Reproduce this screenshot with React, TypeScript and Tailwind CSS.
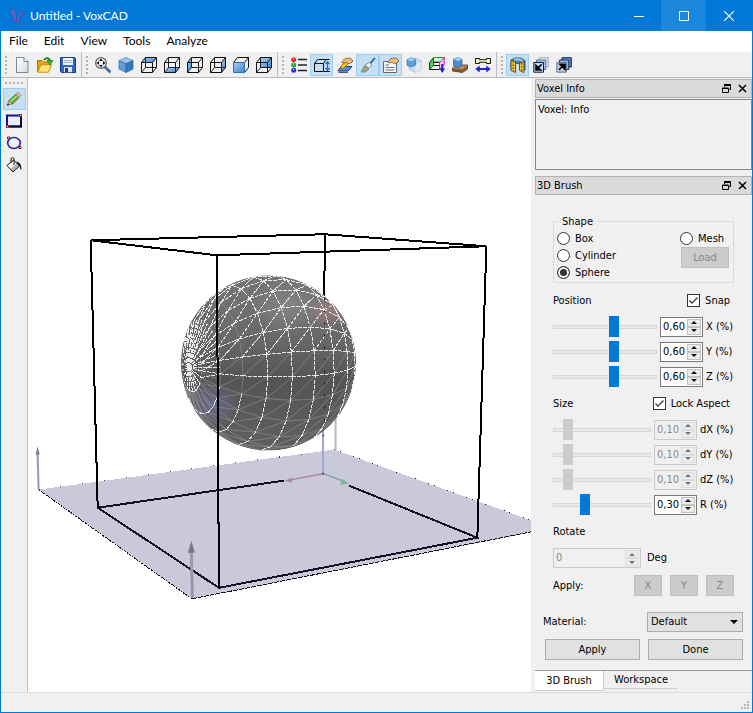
import { useState } from "react";
import type { ReactNode } from "react";
import clsx from "clsx";

type Face = "top" | "bottom" | "left" | "right" | "front" | "back";

const FACES: Record<Face, string> = {
  top: "0.5,5.5 4.5,0.5 15.5,0.5 11.5,5.5",
  bottom: "0.5,15.5 4.5,10.5 15.5,10.5 11.5,15.5",
  left: "0.5,5.5 4.5,0.5 4.5,10.5 0.5,15.5",
  right: "11.5,5.5 15.5,0.5 15.5,10.5 11.5,15.5",
  front: "0.5,5.5 11.5,5.5 11.5,15.5 0.5,15.5",
  back: "4.5,0.5 15.5,0.5 15.5,10.5 4.5,10.5",
};

function Icon({ children }: { children: ReactNode }) {
  return (
    <svg width="16" height="16" viewBox="0 0 16 16" fill="none" aria-hidden="true">
      {children}
    </svg>
  );
}

function CubeIcon({ face }: { face: Face }) {
  return (
    <Icon>
      <polygon points={FACES[face]} fill="url(#faceBlue)" />
      {face !== "front" && (
        <path d="M4.5 .5V10.5M4.5 10.5H15.5M4.5 10.5L.5 15.5" stroke="#222" />
      )}
      <path
        d="M4.5 .5H15.5V10.5M.5 5.5L4.5 .5M11.5 5.5L15.5 .5M11.5 15.5L15.5 10.5"
        stroke="#111"
      />
      <path
        d="M.5 5.5H11.5V15.5H.5Z"
        stroke={face === "front" ? "#2f6fb5" : "#111"}
      />
    </Icon>
  );
}

function SolidCube() {
  return (
    <Icon>
      <path d="M8 .5L15 3.5L8 6.8L1 3.5Z" fill="#9cc8ee" stroke="#3f7fbd" strokeWidth=".7" />
      <path d="M1 3.5L8 6.8V15.5L1 12Z" fill="#5c9dda" stroke="#2f6dab" strokeWidth=".7" />
      <path d="M15 3.5L8 6.8V15.5L15 12Z" fill="#3577bd" stroke="#255f9c" strokeWidth=".7" />
    </Icon>
  );
}

function LayerStack({ up }: { up?: boolean }) {
  return (
    <Icon>
      <path d="M6 .7H15.3V10H6Z" fill={up ? "#5b93cf" : "#dde3ee"} stroke={up ? "#10233f" : "#a3abc0"} />
      <path d="M3.5 3H12.8V12.5H3.5Z" fill={up ? "#8fb5e0" : "#a9bfe0"} stroke={up ? "#1b2f4f" : "#5d7196"} />
      <path d="M.8 5.5H10.5V15.2H.8Z" fill={up ? "#b8c7df" : "#bcdcff"} stroke={up ? "#6c7b94" : "#0c1c38"} />
      {up ? (
        <path d="M3 12.8L8 7.8M4 7.2H9V12.2Z" stroke="#000" strokeWidth="1.6" fill="#000" />
      ) : (
        <path d="M8.6 7.4L4 12M3 8.5V13H7.6Z" stroke="#000" strokeWidth="1.6" fill="#000" />
      )}
    </Icon>
  );
}

function Hand() {
  return (
    <path
      d="M5 4.5L8 1.5L13 1L15.5 3V5L12 7L9 5.5L5 6Z"
      fill="#edb878"
      stroke="#6b421b"
      strokeWidth=".9"
      strokeDasharray="1.5 .6"
    />
  );
}

const fileTools = [
  {
    name: "New",
    icon: (
      <Icon>
        <path d="M2.5 .5H10L14 4.5V15.5H2.5Z" fill="url(#paper)" stroke="#7f8790" />
        <path d="M10 .5V4.5H14" fill="#fff" stroke="#7f8790" />
      </Icon>
    ),
  },
  {
    name: "Open",
    icon: (
      <Icon>
        <path d="M.5 14.5V3.5H5L6.5 5H12.5V8" fill="#e8a317" stroke="#b87800" />
        <path d="M.7 15.2L4 7.7H14.5L11.5 15.2Z" fill="#ffe47a" stroke="#c98d08" />
        <path d="M7 3C9 .2 12.3.6 13 4" stroke="#1c8a1c" strokeWidth="2" />
        <path d="M10 3.6H16L13 8Z" fill="#3bc43b" stroke="#146e14" strokeWidth=".7" />
      </Icon>
    ),
  },
  {
    name: "Save",
    icon: (
      <Icon>
        <path d="M.5 .5H14.5L15.5 1.5V15.5H1.5L.5 14.5Z" fill="#3266bd" stroke="#163a86" />
        <path d="M3 1H13V8H3Z" fill="#f3f7fc" />
        <path d="M4 3.5H12M4 5.5H12" stroke="#9cacc4" />
        <path d="M4 10H12V15.2H4Z" fill="#dfe5ee" />
        <path d="M5 11H8V15H5Z" fill="#1e3d7d" />
      </Icon>
    ),
  },
];

const viewTools = [
  {
    name: "Zoom all",
    icon: (
      <Icon>
        <path d="M10 10L14.6 14.6" stroke="#3571b5" strokeWidth="2.8" strokeLinecap="round" />
        <circle cx="6" cy="6" r="5.3" fill="#f4f6f8" stroke="#5d646b" strokeWidth="1.3" />
        <path
          d="M6 1.6L8 4H4ZM6 10.4L8 8H4ZM1.6 6L4 4V8ZM10.4 6L8 4V8Z"
          fill="#111"
        />
      </Icon>
    ),
  },
  { name: "Isometric", icon: <SolidCube /> },
  { name: "Top", icon: <CubeIcon face="top" /> },
  { name: "Bottom", icon: <CubeIcon face="bottom" /> },
  { name: "Left", icon: <CubeIcon face="left" /> },
  { name: "Right", icon: <CubeIcon face="right" /> },
  { name: "Front", icon: <CubeIcon face="front" /> },
  { name: "Back", icon: <CubeIcon face="back" /> },
];

const panelTools = [
  {
    name: "Palette",
    icon: (
      <Icon>
        <path d="M7 2.5H16M7 8H16M7 13.5H16" stroke="#222" strokeWidth="1.5" />
        <circle cx="2.7" cy="2.7" r="2.5" fill="#e3262e" />
        <circle cx="2.7" cy="8" r="2.5" fill="#27a53c" />
        <circle cx="2.7" cy="13.3" r="2.5" fill="#2633d4" />
        <path d="M2 1.8H3M2 7.1H3M2 12.4H3" stroke="#fff" />
      </Icon>
    ),
  },
  {
    name: "Workspace",
    on: true,
    icon: (
      <Icon>
        <path d="M.5 6.500H9.500V14.500H.5ZM.5 6.500L3.500 2.500H15.500M9.500 6.500L12 2.500M10 14.500H16" stroke="#111" />
        <path d="M13.500 5V13M11.500 7L13.500 4.800L15.500 7M11.500 11L13.500 13.200L15.500 11" stroke="#1f6fd0" strokeWidth="1.3" />
      </Icon>
    ),
  },
  {
    name: "Edit voxels",
    icon: (
      <Icon>
        <path d="M1 14L4 9.5H15L11 14Z" fill="#4f92dc" stroke="#173f7a" />
        <path d="M3 12L5 8L10 4L12 6L7 11Z" fill="#ffc928" stroke="#7b5300" strokeWidth=".7" />
        <Hand />
        <path d="M1.5 15.3H11" stroke="#123363" />
      </Icon>
    ),
  },
  {
    name: "3D brush",
    on: true,
    icon: (
      <Icon>
        <path d="M15 .8L8.5 8.5" stroke="#3f75a8" strokeWidth="2" />
        <path d="M9.5 5.2L12 8L8.6 11.500L5 8.2Z" fill="#e6ecf0" stroke="#5e6c77" strokeWidth=".7" />
        <path d="M5 8.300L8.800 11.600C7 15 4 15.5 1 14.8C3 13 3 10.5 5 8.300Z" fill="#9cab82" stroke="#607050" strokeWidth=".7" />
      </Icon>
    ),
  },
  {
    name: "Voxel info",
    on: true,
    icon: (
      <Icon>
        <path d="M.5 4.500H13.5V15.5H.5Z" fill="#f7fafc" stroke="#5a6a7b" />
        <path d="M2.5 8H6M2.5 10.5H11.5M2.5 13H11.5" stroke="#63707e" />
        <Hand />
      </Icon>
    ),
  },
  {
    name: "Ghost",
    icon: (
      <Icon>
        <path d="M3 4L9 1L15.5 4V12L9.5 15.5L3 12Z" fill="#c6dbef" stroke="#93b4d3" strokeWidth=".7" />
        <path d="M9.5 7.5V15.5L15.5 12V4Z" fill="#dceaf6" />
        <path d="M1 2.5L5 .7L9.500 2.5V8L5 10L1 8Z" fill="#5f9fdc" stroke="#2e6eae" strokeWidth=".7" />
        <path d="M1 2.5L5 4.3L9 2.5L5 .7Z" fill="#a8d0f2" />
      </Icon>
    ),
  },
  {
    name: "Boundary conditions",
    icon: (
      <Icon>
        <path d="M4.5 .5H15.5L12 5H1Z" fill="#d8f7d8" stroke="#0f9b26" />
        <path d="M.7 5.5H10.5V12.5H.7Z" fill="#f8f8f8" stroke="#111" />
        <path d="M.7 5.5L4.5 1V8.5L.7 12.5Z" fill="#4ed65c" stroke="#111" strokeWidth=".7" />
        <path d="M10.5 5.5L15.3 1V7.5L10.5 12.5Z" fill="#f6c7ee" stroke="#d12bb7" />
        <path d="M4.5 8.5H10.5" stroke="#111" />
        <path d="M13.3 7V13" stroke="#1c1ccb" strokeWidth="2" />
        <path d="M10.5 11.5H16L13.3 16Z" fill="#1c1ccb" />
      </Icon>
    ),
  },
  {
    name: "Physics",
    icon: (
      <Icon>
        <path d="M.5 11L5 8H15.5V12L10.5 15.5L.5 14Z" fill="#8f5a2d" stroke="#50300f" strokeWidth=".8" />
        <path d="M.5 11L10.5 12.3L15.5 8.5H5Z" fill="#c08a52" />
        <path d="M1.5 2.3L6 .6L10 2.3V8.5L6 10.8L1.500 8.7Z" fill="#4a8bd0" stroke="#265f9e" strokeWidth=".7" />
        <path d="M1.5 2.3L6 4.3L10 2.3L6 .6Z" fill="#9fcaf0" />
      </Icon>
    ),
  },
  {
    name: "Tensile test",
    icon: (
      <Icon>
        <path d="M.5 1.5H4.5V2.7H11.5V1.5H15.5V6.5H11.5V5.3H4.5V6.5H.5Z" fill="#f5f5c4" stroke="#111" />
        <path d="M3 12H13" stroke="#2222d8" strokeWidth="2" />
        <path d="M4.7 8.5V15.5L.3 12ZM11.3 8.5V15.5L15.7 12Z" fill="#2222d8" />
      </Icon>
    ),
  },
];

const layerTools = [
  {
    name: "Section",
    on: true,
    icon: (
      <Icon>
        <path d="M1 3L5 1H11L15 3.5V13L10 12V6.5H5.5V14.5L1 12.5Z" fill="#4a7fb8" stroke="#24507f" strokeWidth=".8" />
        <path d="M4 2.5H10L13 4.5" stroke="#a8d2f2" strokeWidth="2" />
        <path d="M1 3L5.5 4.500V15.5L1 13.500ZM9.500 6L14 4.500V15.5L9.500 13.500Z" fill="#f3c42f" stroke="#4b3a0a" strokeWidth=".8" />
        <path d="M3.2 4.5V14M11.8 6V14" stroke="#3d3108" strokeDasharray="1.5 1.5" />
      </Icon>
    ),
  },
  { name: "Layer down", icon: <LayerStack /> },
  { name: "Layer up", icon: <LayerStack up /> },
];

const drawTools = [
  {
    name: "Pencil",
    on: true,
    icon: (
      <Icon>
        <path d="M1.500 14L3 9.500L6.500 13Z" fill="#e8bf82" stroke="#7a5524" strokeWidth=".6" />
        <path d="M3 9.500L9.800 3.200L13 6.600L6.500 13Z" fill="#6aa83a" stroke="#3f7420" strokeWidth=".8" />
        <path d="M4.500 10.800L11 4.800" stroke="#c7e59d" strokeWidth="1.300" />
        <path d="M9.800 3.200L12 1.200L15 4.400L13 6.600Z" fill="#e9b9a5" stroke="#99705f" strokeWidth=".7" />
        <path d="M1.300 14.300L2.600 13" stroke="#222" strokeWidth="1.5" />
      </Icon>
    ),
  },
  {
    name: "Rectangle",
    icon: (
      <Icon>
        <path d="M1 2.500H15V13.500H1Z" fill="#ececf4" stroke="#1010a0" strokeWidth="2" />
        <path d="M15 4V13.500H3" stroke="#0a0a30" strokeWidth="2" />
        <path d="M.5 12.5H2.5V14.5H.5ZM13.5 1.5H15.5V3.5H13.5Z" fill="#fff" stroke="#9a1010" />
      </Icon>
    ),
  },
  {
    name: "Ellipse",
    icon: (
      <Icon>
        <ellipse cx="8" cy="8" rx="6.3" ry="5.5" stroke="#2626a8" strokeWidth="1.6" />
        <path d="M1.5 2H3.5V4H1.5ZM13 11.5H15V13.5H13Z" fill="#fff" stroke="#9a1010" />
      </Icon>
    ),
  },
  {
    name: "Fill",
    icon: (
      <Icon>
        <path d="M1 8.5L7.5 3L13.5 9L7 15Z" fill="#fff" />
        <path d="M4.5 11.8L11 6.5L13.5 9L7 15Z" fill="#b5b5b5" />
        <path d="M1 8.5L7.5 3L13.5 9L7 15Z" stroke="#111" />
        <path d="M5 5.5V1.5Q6.5 -.3 8 1.5V8" stroke="#111" />
        <path d="M10 4.500Q15.8 5 15.5 13Q14 12.5 13.5 9Z" fill="#111" />
      </Icon>
    ),
  },
];

type Tool = { name: string; icon: ReactNode; on?: boolean };

function ToolButton({ tool }: { tool: Tool }) {
  return (
    <button
      type="button"
      aria-label={tool.name}
      aria-pressed={!!tool.on}
      className={clsx(
        "flex h-[22px] w-[23px] items-center justify-center border",
        tool.on ? "border-[#99cdf2] bg-[#c5e0f5]" : "border-transparent",
      )}
    >
      {tool.icon}
    </button>
  );
}

function ToolGroup({ tools, last }: { tools: Tool[]; last?: boolean }) {
  return (
    <div
      className={clsx(
        "flex items-center gap-[2px] pl-1 pr-[2px]",
        !last && "border-r border-[#bdbdbd]",
      )}
    >
      <span className="h-[18px] border-l-2 border-dotted border-[#b4b4b4] pl-px" />
      <div className="flex">
        {tools.map((t) => (
          <ToolButton key={t.name} tool={t} />
        ))}
      </div>
    </div>
  );
}

type Vec = [number, number, number];

// Latitude/longitude wireframe of the brush, its pole pointing left and towards the viewer.
const CENTER = { x: 268.5, y: 362.5, r: 87.5 };
const STEP = Math.PI / 11;
const PHASE = (10 * Math.PI) / 180;
const AXIS: Vec = [-0.913, 0.05, 0.405];
const U: Vec = [0.404, -0.022, 0.914];
const V: Vec = [0.055, 0.998, 0];

function project(lat: number, lon: number) {
  const t = lat * STEP;
  const p = PHASE + lon * STEP;
  const at = (i: number) =>
    Math.cos(t) * AXIS[i] +
    Math.sin(t) * (Math.cos(p) * U[i] + Math.sin(p) * V[i]);
  return {
    x: CENTER.x + CENTER.r * at(0),
    y: CENTER.y + CENTER.r * at(1),
    z: at(2),
  };
}

type Point = ReturnType<typeof project>;

function buildMesh() {
  let bright = "";
  let faint = "";
  const add = (p: Point, q: Point, isBright: (x: number, y: number) => boolean) => {
    if (p.z < -0.05 || q.z < -0.05) return;
    const d = `M${p.x.toFixed(1)} ${p.y.toFixed(1)}L${q.x.toFixed(1)} ${q.y.toFixed(1)}`;
    if (isBright((p.x + q.x) / 2, (p.y + q.y) / 2)) bright += d;
    else faint += d;
  };
  for (let lat = 0; lat < 11; lat++) {
    for (let lon = 0; lon < 22; lon++) {
      const here = project(lat, lon);
      const along = project(lat + 1, lon);
      const around = project(lat, lon + 1);
      add(here, along, (_, y) => y < 380);
      if (lat > 0) {
        add(here, around, (_, y) => lat > 3 || y > 385);
        add(around, along, (x, y) => y < (x < 230 ? 380 : 345));
      } else {
        add(here, project(2, lon - 0.5), (_, y) => y < 372);
      }
    }
  }
  return { bright, faint };
}

const mesh = buildMesh();

function Viewport() {
  return (
    <svg
      className="h-full w-full"
      viewBox="28 78 503 613"
      preserveAspectRatio="xMidYMid slice"
      fill="none"
      role="img"
      aria-label="3D view"
    >
      <defs>
        <linearGradient id="ballBase" x1="0" y1="0" x2="0" y2="1">
          <stop offset="0" stopColor="#767676" />
          <stop offset=".35" stopColor="#696969" />
          <stop offset=".6" stopColor="#545454" />
          <stop offset="1" stopColor="#606060" />
        </linearGradient>
        <radialGradient id="ballLight">
          <stop offset="0" stopColor="#8c8c8c" stopOpacity=".7" />
          <stop offset="1" stopColor="#8c8c8c" stopOpacity="0" />
        </radialGradient>
        <radialGradient id="ballRed">
          <stop offset="0" stopColor="#a58282" stopOpacity=".75" />
          <stop offset="1" stopColor="#a58282" stopOpacity="0" />
        </radialGradient>
        <radialGradient id="ballBlue">
          <stop offset="0" stopColor="#6c6c96" stopOpacity=".8" />
          <stop offset="1" stopColor="#6c6c96" stopOpacity="0" />
        </radialGradient>
        <clipPath id="ballClip">
          <circle cx={CENTER.x} cy={CENTER.y} r={CENTER.r} />
        </clipPath>
      </defs>

      <g shapeRendering="crispEdges">
        <path d="M39 489L334 449L540 523V530L192 598Z" fill="#cac9d9" />
        <path d="M39 489L334 449" stroke="#333" strokeDasharray="1 21" />
        <path d="M334 449L531 520" stroke="#222" strokeDasharray="1 5 1 13" />
        <path d="M39 489L192 598" stroke="#111" strokeDasharray="2 1" />
        <path d="M192 598L531 531" stroke="#111" strokeDasharray="5 1" />
        <g stroke="#111122" strokeWidth="2">
          <path d="M98 507L284 480M349 485L477 537L219 587L98 507" />
        </g>
      </g>

      <path d="M335.5 410V449" stroke="#b5b5c8" strokeWidth="2" />
      <path d="M323 430V473" stroke="#a4a4d2" strokeWidth="2" />
      <path d="M323 473L288 479.5" stroke="#a98b9c" strokeWidth="1.5" />
      <path d="M284 480L292 477V482Z" fill="#a98b9c" />
      <path d="M323 473L342 480" stroke="#7da196" strokeWidth="1.5" />
      <path d="M349 483L342 478L340 484Z" fill="#8cae9f" />

      <g stroke="#9797b2" fill="#77778f">
        <path d="M39 489L38 452" strokeWidth="2" />
        <path d="M38 446L40 454H36Z" stroke="none" />
        <path d="M192.5 597L191.5 550" strokeWidth="3" />
        <path d="M191.5 540L195 552H188Z" stroke="none" />
      </g>

      <path
        d="M91 240L325 234L486 246L217 255ZM91 240L98 507M486 246L477 537M325 234L324 300"
        stroke="#000"
        strokeWidth="2"
        shapeRendering="crispEdges"
      />

      <g clipPath="url(#ballClip)">
        <circle cx={CENTER.x} cy={CENTER.y} r={CENTER.r} fill="url(#ballBase)" />
        <ellipse cx="288" cy="306" rx="42" ry="28" fill="url(#ballLight)" />
        <ellipse cx="328" cy="310" rx="22" ry="18" fill="url(#ballRed)" />
        <ellipse cx="212" cy="404" rx="28" ry="24" fill="url(#ballBlue)" />
      </g>
      <path d={mesh.faint} stroke="#a0a0a0" strokeWidth=".8" opacity=".6" />
      <path
        d={mesh.bright}
        stroke="#ffffff"
        strokeWidth="1"
        strokeDasharray="4 1"
        opacity=".85"
        shapeRendering="crispEdges"
      />
      <path d="M324.5 298V430" stroke="#111" strokeDasharray="2 10" />
      <path d="M323 434V474" stroke="#222" strokeDasharray="2 36" />
      <path
        d="M217 255L219 587"
        stroke="#000"
        strokeWidth="2"
        shapeRendering="crispEdges"
      />
    </svg>
  );
}

function DockTitle({ title }: { title: string }) {
  return (
    <div className="flex h-[19px] items-center border border-[#b4b4b4] bg-[#dadada] pl-px pr-1">
      <h2 className="flex-1">{title}</h2>
      <button type="button" aria-label={`Float ${title}`} className="mr-[7px]">
        <svg width="9" height="9" viewBox="0 0 9 9" fill="none">
          <path d="M2.5 3V1H8.5V5.5H6.5" stroke="#000" />
          <path d="M2 1H9" stroke="#000" strokeWidth="2" />
          <path d="M.5 4H6.5V8.5H.5Z" stroke="#000" />
          <path d="M0 4.5H7" stroke="#000" />
        </svg>
      </button>
      <button type="button" aria-label={`Close ${title}`}>
        <svg width="9" height="9" viewBox="0 0 9 9">
          <path d="M1 1L8 8M8 1L1 8" stroke="#000" strokeWidth="1.5" />
        </svg>
      </button>
    </div>
  );
}

function Radio({ label, value, onPick }: { label: string; value: string; onPick: (v: string) => void }) {
  return (
    <label className="flex h-[17px] items-center gap-[5px]">
      <input
        type="radio"
        name="shape"
        checked={value === label}
        onChange={() => onPick(label)}
        className="h-[13px] w-[13px] appearance-none rounded-full border border-[#333] bg-white checked:bg-[#333] checked:shadow-[inset_0_0_0_2px_#fff]"
      />
      {label}
    </label>
  );
}

function Check({ label }: { label: string }) {
  return (
    <label className="flex items-center gap-[5px]">
      <span className="grid">
        <input
          type="checkbox"
          defaultChecked
          className="peer col-start-1 row-start-1 h-[13px] w-[13px] appearance-none border border-[#333] bg-white"
        />
        <svg
          className="pointer-events-none invisible col-start-1 row-start-1 peer-checked:visible"
          width="13"
          height="13"
          viewBox="0 0 13 13"
          fill="none"
        >
          <path d="M2.5 6.5L5 9.2L10.5 3.5" stroke="#333" strokeWidth="1.2" />
        </svg>
      </span>
      {label}
    </label>
  );
}

type SpinProps = {
  label: string;
  value: string;
  disabled?: boolean;
  wide?: boolean;
  onStep?: (by: number) => void;
};

function Spin({ label, value, disabled, wide, onStep }: SpinProps) {
  return (
    <div
      className={clsx(
        "flex h-5 border p-px",
        wide ? "w-[88px]" : "w-[43px]",
        disabled ? "border-[#cacaca] bg-[#f0f0f0] text-[#888]" : "border-[#7a7a7a] bg-white",
      )}
    >
      <input
        aria-label={label}
        value={value}
        readOnly
        disabled={disabled}
        className="w-0 min-w-0 flex-1 bg-transparent pl-px outline-none"
      />
      <div className="flex w-[14px] flex-col bg-[#ececec]">
        {[1, -1].map((by) => (
          <button
            key={by}
            type="button"
            disabled={disabled}
            aria-label={by > 0 ? `Increase ${label}` : `Decrease ${label}`}
            onClick={() => onStep?.(by)}
            className={clsx(
              "flex flex-1 items-center justify-center border",
              disabled ? "border-[#dcdcdc]" : "border-[#c2c2c2]",
            )}
          >
            <svg width="6" height="3" viewBox="0 0 6 3">
              <path d={by > 0 ? "M0 3L3 0L6 3Z" : "M0 0L3 3L6 0Z"} fill={disabled ? "#777" : "#111"} />
            </svg>
          </button>
        ))}
      </div>
    </div>
  );
}

function SliderRow({ label, start, disabled, size }: { label: string; start: number; disabled?: boolean; size?: boolean }) {
  const [value, setValue] = useState(start);
  return (
    <div className="flex h-[25px] items-center">
      <input
        type="range"
        aria-label={label}
        min={0}
        max={100}
        value={value}
        disabled={disabled}
        onChange={(e) => setValue(Number(e.target.value))}
        className={clsx(
          "h-[21px] w-0 min-w-0 flex-1 appearance-none bg-transparent",
          "[&::-webkit-slider-runnable-track]:h-1 [&::-webkit-slider-runnable-track]:border [&::-webkit-slider-runnable-track]:border-[#d6d6d6] [&::-webkit-slider-runnable-track]:bg-[#e7eaea]",
          "[&::-webkit-slider-thumb]:-mt-[10px] [&::-webkit-slider-thumb]:h-[21px] [&::-webkit-slider-thumb]:w-[10px] [&::-webkit-slider-thumb]:appearance-none",
          disabled
            ? "[&::-webkit-slider-thumb]:bg-[#cccccc]"
            : "[&::-webkit-slider-thumb]:bg-[#0078d7]",
        )}
      />
      <div className="ml-[3px] flex items-center">
        <Spin
          label={label}
          value={(value / 100).toFixed(2).replace(".", ",")}
          disabled={disabled}
          onStep={(by) => setValue((v) => Math.min(100, Math.max(0, v + by)))}
        />
        <span className={clsx("pl-[3px] whitespace-nowrap", size ? "w-[37px]" : "w-[31px]")}>
          {label}
        </span>
      </div>
    </div>
  );
}

function BrushPanel() {
  const [shape, setShape] = useState("Sphere");

  return (
    <form className="flex flex-col" onSubmit={(e) => e.preventDefault()}>
      <div className="flex flex-col px-[18px] pt-[18px]">
        <fieldset className="border border-[#dadada]">
          <legend className="ml-[5px] h-[17px] px-[3px] leading-[17px]">Shape</legend>
          <div className="flex justify-between pb-px pl-[3px] pr-1">
            <div>
              <Radio label="Box" value={shape} onPick={setShape} />
              <Radio label="Cylinder" value={shape} onPick={setShape} />
              <Radio label="Sphere" value={shape} onPick={setShape} />
            </div>
            <div>
              <Radio label="Mesh" value={shape} onPick={setShape} />
              <button
                type="button"
                disabled
                className="ml-px h-[21px] w-12 border border-[#bfbfbf] bg-[#cccccc] text-[#888]"
              >
                Load
              </button>
            </div>
          </div>
        </fieldset>

        <div className="mt-[9px] flex h-[17px] items-center justify-between pr-1">
          <h3>Position</h3>
          <Check label="Snap" />
        </div>
        <div className="mt-[5px]">
          <SliderRow label="X (%)" start={60} />
          <SliderRow label="Y (%)" start={60} />
          <SliderRow label="Z (%)" start={60} />
        </div>

        <div className="mt-[6px] flex h-[17px] items-center justify-between pr-1">
          <h3>Size</h3>
          <Check label="Lock Aspect" />
        </div>
        <div className="mt-[5px]">
          <SliderRow label="dX (%)" start={10} disabled size />
          <SliderRow label="dY (%)" start={10} disabled size />
          <SliderRow label="dZ (%)" start={10} disabled size />
          <SliderRow label="R (%)" start={30} size />
        </div>

        <h3 className="mt-[6px] h-[17px] leading-[17px]">Rotate</h3>
        <div className="mt-2 flex items-center gap-[6px]">
          <Spin label="Rotation" value="0" disabled wide />
          <span>Deg</span>
        </div>
        <div className="mt-[7px] flex items-center gap-2">
          <span className="flex-1">Apply:</span>
          {["X", "Y", "Z"].map((axis) => (
            <button
              key={axis}
              type="button"
              disabled
              className="h-[21px] w-7 border border-[#bfbfbf] bg-[#cccccc] text-[#888]"
            >
              {axis}
            </button>
          ))}
        </div>
      </div>

      <div className="mt-4 flex items-center justify-between pl-2 pr-[9px]">
        <label htmlFor="material">Material:</label>
        <div className="grid w-24">
          <select
            id="material"
            className="col-start-1 row-start-1 h-5 appearance-none border border-[#adadad] bg-[#e1e1e1] pl-[3px]"
          >
            <option>Default</option>
          </select>
          <svg
            className="pointer-events-none col-start-1 row-start-1 mr-[5px] self-center justify-self-end"
            width="8"
            height="4"
            viewBox="0 0 8 4"
          >
            <path d="M0 0H8L4 4Z" fill="#000" />
          </svg>
        </div>
      </div>
      <div className="mt-[7px] flex gap-2 pl-[10px] pr-[9px]">
        <button type="submit" className="h-[21px] flex-1 border border-[#adadad] bg-[#e1e1e1]">
          Apply
        </button>
        <button type="button" className="h-[21px] flex-1 border border-[#adadad] bg-[#e1e1e1]">
          Done
        </button>
      </div>
    </form>
  );
}

export default function App() {
  return (
    <div className="flex min-h-screen flex-col border-x border-b border-[#0078d7] bg-[#f0f0f0] font-['DejaVu_Sans_Condensed','DejaVu_Sans',sans-serif] text-[11px] leading-4 text-black">
      <svg width="0" height="0" className="absolute" aria-hidden="true">
        <defs>
          <linearGradient id="faceBlue" x1="0" y1="0" x2="1" y2="1">
            <stop offset="0" stopColor="#a9d3f7" />
            <stop offset="1" stopColor="#3a80ca" />
          </linearGradient>
          <linearGradient id="paper" x1="0" y1="0" x2="1" y2="1">
            <stop offset="0" stopColor="#ffffff" />
            <stop offset="1" stopColor="#d5dbe1" />
          </linearGradient>
        </defs>
      </svg>

      <header className="flex h-[31px] items-center bg-[#0078d7] font-['Lato','Open_Sans',sans-serif] text-xs text-white">
        <svg className="ml-2" width="16" height="16" viewBox="0 0 16 16" aria-hidden="true">
          <path d="M1 2L5 1L7 5L7 10L4 9Z" fill="#5d55b8" />
          <path d="M11 4L14 2L15 5L12 8L11 13L7 15L4 13L4 9L9 10Z" fill="#5147ad" />
          <path d="M2 3L5 5L6 12M13 4L10 9L8 14" stroke="#7d6fd0" fill="none" />
          <path d="M4 11L7 13" stroke="#a04a98" />
        </svg>
        <h1 className="ml-[5px] flex-1">Untitled - VoxCAD</h1>
        <button type="button" aria-label="Minimize" className="flex h-full w-[45px] items-center justify-center">
          <svg width="10" height="10" viewBox="0 0 10 10">
            <path d="M0 5.5H10" stroke="#fff" />
          </svg>
        </button>
        <button type="button" aria-label="Maximize" className="flex h-full w-[45px] items-center justify-center bg-[#1a86dc]">
          <svg width="10" height="10" viewBox="0 0 10 10">
            <path d="M.5 .5H9.5V9.5H.5Z" stroke="#fff" fill="none" />
          </svg>
        </button>
        <button type="button" aria-label="Close" className="flex h-full w-[46px] items-center justify-center">
          <svg width="10" height="10" viewBox="0 0 10 10">
            <path d="M0 0L10 10M10 0L0 10" stroke="#fff" strokeWidth="1.1" />
          </svg>
        </button>
      </header>

      <nav className="flex h-[21px] items-center gap-4 bg-white pb-px pl-2 font-['Lato','Open_Sans',sans-serif] text-xs">
        {["File", "Edit", "View", "Tools", "Analyze"].map((item) => (
          <button key={item} type="button">
            {item}
          </button>
        ))}
      </nav>

      <div className="flex h-[26px] border-b border-[#b9b9b9]">
        <ToolGroup tools={fileTools} />
        <ToolGroup tools={viewTools} />
        <ToolGroup tools={panelTools} />
        <ToolGroup tools={layerTools} last />
      </div>

      <div className="flex flex-1">
        <aside className="flex w-[27px] flex-col items-center border-r border-[#c0c0c0] pt-1">
          <span className="mb-1 w-[18px] border-t-2 border-dotted border-[#b4b4b4]" />
          {drawTools.map((t) => (
            <ToolButton key={t.name} tool={t} />
          ))}
        </aside>

        <main className="min-w-0 flex-1 bg-white">
          <Viewport />
        </main>

        <aside className="flex w-[221px] flex-col pl-1 pt-px">
          <DockTitle title="Voxel Info" />
          <div className="mt-px mb-[6px] h-[71px] border border-[#828790] px-[2px] py-[2px]">
            Voxel: Info
          </div>
          <DockTitle title="3D Brush" />
          <BrushPanel />
          <div className="mt-[10px] flex items-start border-t border-[#9a9a9a]" role="tablist">
            <button
              type="button"
              role="tab"
              aria-selected="true"
              className="h-5 w-[69px] border-r border-b border-[#d0d0d0] bg-white"
            >
              3D Brush
            </button>
            <button
              type="button"
              role="tab"
              aria-selected="false"
              className="h-[18px] w-[74px] border-b border-[#d0d0d0]"
            >
              Workspace
            </button>
          </div>
        </aside>
      </div>

      <footer className="flex h-5 items-end justify-end border-t border-[#dcdcdc] p-[2px]">
        <svg width="9" height="9" viewBox="0 0 9 9" fill="#b5b5b5" aria-hidden="true">
          <path d="M6 0H8V2H6ZM3 3H5V5H3ZM6 3H8V5H6ZM0 6H2V8H0ZM3 6H5V8H3ZM6 6H8V8H6Z" />
        </svg>
      </footer>
    </div>
  );
}
